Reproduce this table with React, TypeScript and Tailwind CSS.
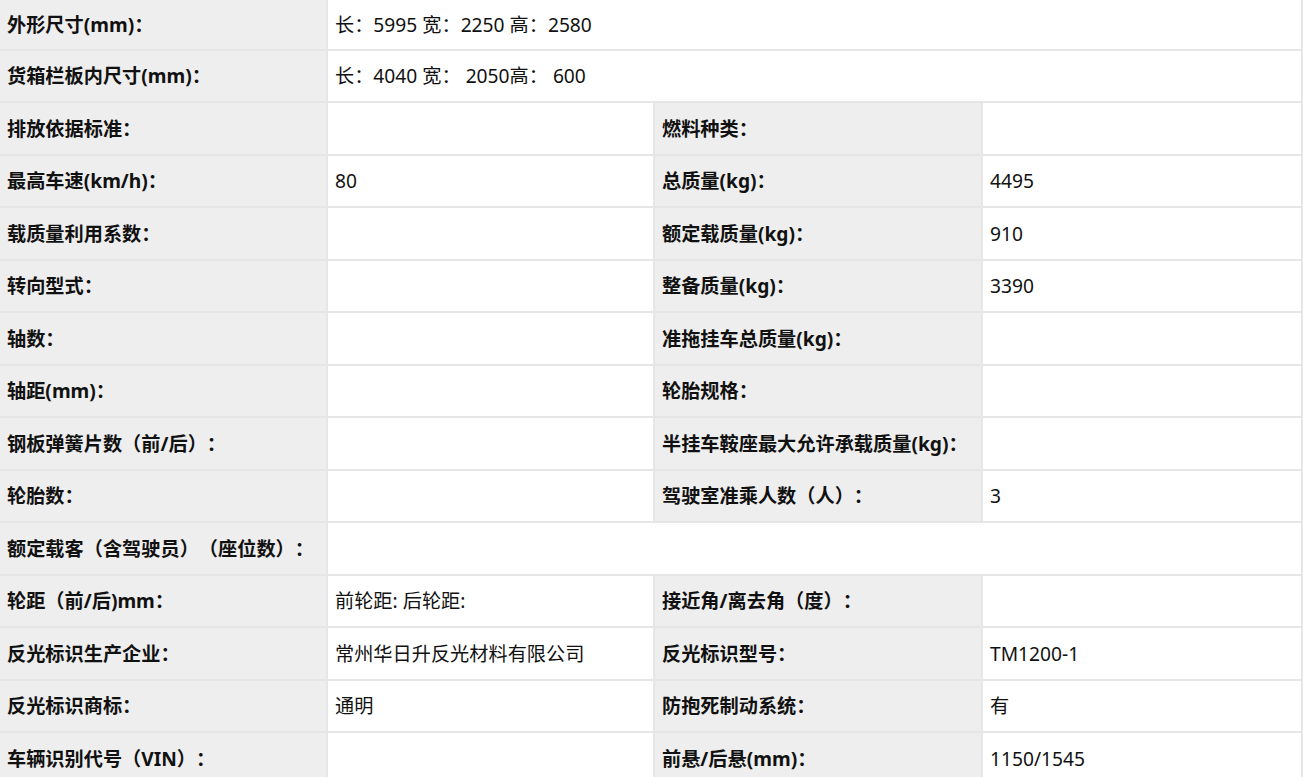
type Row = { l1: string; v1: string; l2?: string; v2?: string; full?: boolean };

const rows: Row[] = [
  { l1: "外形尺寸(mm)：", v1: "长：5995 宽：2250 高：2580", full: true },
  { l1: "货箱栏板内尺寸(mm)：", v1: "长：4040 宽： 2050高： 600", full: true },
  { l1: "排放依据标准：", v1: "", l2: "燃料种类：", v2: "" },
  { l1: "最高车速(km/h)：", v1: "80", l2: "总质量(kg)：", v2: "4495" },
  { l1: "载质量利用系数：", v1: "", l2: "额定载质量(kg)：", v2: "910" },
  { l1: "转向型式：", v1: "", l2: "整备质量(kg)：", v2: "3390" },
  { l1: "轴数：", v1: "", l2: "准拖挂车总质量(kg)：", v2: "" },
  { l1: "轴距(mm)：", v1: "", l2: "轮胎规格：", v2: "" },
  { l1: "钢板弹簧片数（前/后）：", v1: "", l2: "半挂车鞍座最大允许承载质量(kg)：", v2: "" },
  { l1: "轮胎数：", v1: "", l2: "驾驶室准乘人数（人）：", v2: "3" },
  { l1: "额定载客（含驾驶员）（座位数）：", v1: "", full: true },
  { l1: "轮距（前/后)mm：", v1: "前轮距: 后轮距:", l2: "接近角/离去角（度）：", v2: "" },
  { l1: "反光标识生产企业：", v1: "常州华日升反光材料有限公司", l2: "反光标识型号：", v2: "TM1200-1" },
  { l1: "反光标识商标：", v1: "通明", l2: "防抱死制动系统：", v2: "有" },
  { l1: "车辆识别代号（VIN）：", v1: "", l2: "前悬/后悬(mm)：", v2: "1150/1545" },
];

const label = "flex items-center px-[7px] pt-[2px] bg-[#eeeeee] font-bold border-r-2 border-b-2 border-[#e6e6e6] whitespace-nowrap";
const value = "flex items-center px-[7px] pt-[2px] bg-white border-r-2 border-b-2 border-[#e6e6e6] whitespace-pre";

export default function App() {
  return (
    <div
      className="w-[1303px] h-[777px] overflow-hidden bg-white text-[19.2px] text-[#111] [text-spacing-trim:space-all]"
      style={{ fontFamily: '"Noto Sans", "Noto Sans CJK SC", sans-serif' }}
    >
      {rows.map((r, i) => (
        <div
          key={i}
          className={
            "grid grid-cols-[328px_327px_328px_1fr] " + (i === 0 ? "h-[50.5px]" : "h-[52.5px]")
          }
        >
          <div className={label}>{r.l1}</div>
          {r.full ? (
            <div className={value + " col-span-3 border-r-0"}>{r.v1}</div>
          ) : (
            <>
              <div className={value}>{r.v1}</div>
              <div className={label}>{r.l2}</div>
              <div className={value + " border-r-0"}>{r.v2}</div>
            </>
          )}
        </div>
      ))}
    </div>
  );
}
